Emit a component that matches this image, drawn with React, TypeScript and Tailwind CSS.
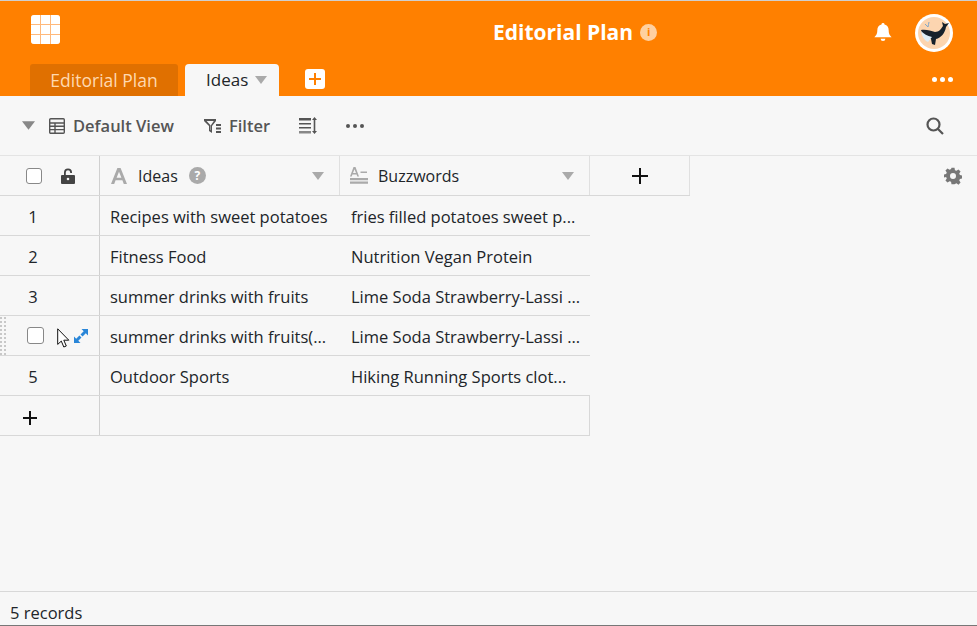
const rows = [
  { id: "1", idea: "Recipes with sweet potatoes", buzz: "fries filled potatoes sweet p..." },
  { id: "2", idea: "Fitness Food", buzz: "Nutrition Vegan Protein" },
  { id: "3", idea: "summer drinks with fruits", buzz: "Lime Soda Strawberry-Lassi ..." },
  { id: "4", idea: "summer drinks with fruits(...", buzz: "Lime Soda Strawberry-Lassi ...", hover: true },
  { id: "5", idea: "Outdoor Sports", buzz: "Hiking Running Sports clot..." },
];

function Caret({ className }: { className: string }) {
  return (
    <svg viewBox="0 0 12 8" className={className}>
      <path d="M0 0h12L6 8z" fill="currentColor" />
    </svg>
  );
}

function AppsIcon() {
  return (
    <div className="grid grid-cols-[repeat(3,9px)] grid-rows-[repeat(3,9px)] gap-px w-[29px] h-[29px] mb-[6px] rounded-[3px] overflow-hidden bg-[#ffb87a]">
      {Array.from({ length: 9 }).map((_, i) => (
        <div key={i} className="bg-white" />
      ))}
    </div>
  );
}

function Whale() {
  return (
    <svg viewBox="0 0 38 38" className="w-[38px] h-[38px]">
      <circle cx="19" cy="19" r="19" fill="#fff" />
      <circle cx="19" cy="19" r="16" fill="#fcd5b0" />
      <path d="M6 16c5-1 10 1 14 2 4 0 6-3 8-6l-1-4 3 2 4-1-3 4c-1 6-5 11-10 12l-1 6-3-1-1-5c-5-1-9-4-10-9z" fill="#17212b" />
      <path d="M6 17c3 3 6 5 11 6l-4 5c-4-2-6-6-7-11z" fill="#dcecf6" />
      <path d="M13 13c0-2 1-3 1-5M13 13c-1-1-2-2-3-3" stroke="#7fa6c9" strokeWidth="1" fill="none" />
    </svg>
  );
}

function TableIcon() {
  return (
    <svg viewBox="0 0 16 16" className="w-[16px] h-[16px] text-[#555]" fill="none" stroke="currentColor" strokeWidth="1.4">
      <rect x="0.7" y="0.7" width="14.600" height="14.600" rx="1" />
      <path d="M0.7 5h14.600M0.7 8.200h14.600M0.7 11.600h14.600M6 5v10.300" />
    </svg>
  );
}

function FilterIcon() {
  return (
    <svg viewBox="0 0 18 16" className="w-[18px] h-[16px] text-[#555]" fill="currentColor">
      <path d="M0 1h12v2L8 8v7l-3-2V8L0 3zm2.600 2L6.500 7.200v4.700l.4.300V7.200L9.800 3z" fillRule="evenodd" />
      <path d="M12 6h5v2h-5zM12 9.500h5v2h-5zM12 13h5v2h-5z" />
    </svg>
  );
}

function SortIcon() {
  return (
    <svg viewBox="0 0 19 17" className="w-[19px] h-[17px] text-[#555]" fill="currentColor">
      <path d="M0 1h12v2.500H0zM0 6h12v1.500H0zM0 10h12v1.500H0z" />
      <path d="M0 14h12v2.500H0z" fill="#888" />
      <path d="M15.500 0l2.500 3h-1.700v11H18l-2.500 3-2.500-3h1.700V3H13z" />
    </svg>
  );
}

function Dots({ className, dot }: { className: string; dot: string }) {
  return (
    <div className={`flex gap-[3px] ${className}`}>
      <span className={`${dot} rounded-full bg-current`} />
      <span className={`${dot} rounded-full bg-current`} />
      <span className={`${dot} rounded-full bg-current`} />
    </div>
  );
}

function LockIcon() {
  return (
    <svg viewBox="0 0 14 16" className="w-[14px] h-[16px] text-[#444]" fill="currentColor">
      <path d="M3 7V4.500a4 4 0 0 1 8 0V5H9.200v-.5a2.200 2.200 0 0 0-4.400 0V7H13a1 1 0 0 1 1 1v7a1 1 0 0 1-1 1H1a1 1 0 0 1-1-1V8a1 1 0 0 1 1-1z" />
      <circle cx="7" cy="11" r="1.300" fill="#f7f7f7" />
    </svg>
  );
}

function TextColIcon() {
  return (
    <svg viewBox="0 0 16 16" className="w-[16px] h-[16px] text-[#aaa]" fill="currentColor">
      <path d="M6.400 0h3.200L16 16h-3.200l-1.400-3.800H4.600L3.200 16H0zm1.600 3.800L5.600 9.800h4.800z" fillRule="evenodd" />
    </svg>
  );
}

function LongTextIcon() {
  return (
    <svg viewBox="0 0 18 17" className="w-[18px] h-[17px] text-[#aaa]" fill="currentColor">
      <path d="M3.500 0h2L9 9.500H7.300l-.7-2H2.400l-.7 2H0zm1 2.200L3 6h3z" fillRule="evenodd" />
      <path d="M10.500 4.500H17V6h-6.500zM0 11h18v2.200H0zM0 14.500h18v2.200H0z" />
    </svg>
  );
}

function GearIcon() {
  return (
    <svg viewBox="0 0 24 24" className="w-[18px] h-[18px] text-[#777]" fill="currentColor">
      <path fillRule="evenodd" d="M10 1h4l.6 3.200 2 .9 2.700-1.800 2.800 2.800-1.800 2.700.9 2 3.200.6v4l-3.200.6-.9 2 1.800 2.700-2.800 2.800-2.700-1.800-2 .9L14 23h-4l-.6-3.200-2-.9-2.700 1.800-2.800-2.800 1.800-2.700-.9-2L-.4 14v-4l3.200-.6.9-2L1.900 4.700 4.700 1.900l2.700 1.800 2-.9zM12 8a4 4 0 1 0 0 8 4 4 0 0 0 0-8z" />
    </svg>
  );
}

function CursorIcon() {
  return (
    <svg viewBox="0 0 13 20" className="absolute left-[57px] top-[12px] w-[13px] h-[20px]">
      <path d="M.7.8v15.600l3.600-3.300 2.500 5.900 2.500-1-2.500-5.800h5z" fill="#fff" stroke="#111" strokeWidth="1" />
    </svg>
  );
}

function ExpandIcon() {
  return (
    <svg viewBox="0 0 14 14" className="w-[14px] h-[14px] ml-[30px] text-[#2a86d8]" fill="currentColor">
      <path d="M14 0v6.500L11.800 4.300 8.600 7.500 6.500 5.400 9.700 2.200 7.500 0z" />
      <path d="M0 14V7.500l2.200 2.200 3.200-3.200 2.100 2.100-3.200 3.200L6.500 14z" />
    </svg>
  );
}

function GripDots() {
  return (
    <div className="grid grid-cols-2 gap-[2px] w-[6px] mr-[21px]">
      {Array.from({ length: 20 }).map((_, i) => (
        <span key={i} className="w-[2px] h-[2px] bg-[#c8c8c8]" />
      ))}
    </div>
  );
}

export default function App() {
  return (
    <div className="w-[977px] h-[626px] flex flex-col bg-[#f7f7f7] text-[#212529] overflow-hidden border-t border-[#cfcfcf] border-b-[#777] border-b font-['Open_Sans',sans-serif] text-[16px]">
      {/* Header */}
      <header className="h-[95px] shrink-0 bg-[#ff8000] flex flex-col">
        <div className="flex items-center justify-between h-[63px] pl-[31px] pr-[24px]">
          <AppsIcon />
          <div className="flex items-center gap-[7px] ml-[216px] text-white font-bold text-[21px]">
            Editorial Plan
            <span className="w-[17px] h-[17px] rounded-full bg-[#ffd0a0] text-[#ff8000] text-[11px] flex items-center justify-center">i</span>
          </div>
          <div className="flex items-center gap-[23px]">
            <svg viewBox="0 0 18 20" className="w-[18px] h-[19px] text-white" fill="currentColor">
              <path d="M9 0a1.600 1.600 0 0 1 1.600 1.700C13.500 2.400 15 4.800 15 8c0 4 1.500 5.300 3 7H0c1.500-1.700 3-3 3-7 0-3.200 1.500-5.600 4.400-6.300A1.600 1.600 0 0 1 9 0zM6.500 16.500h5a2.500 2.500 0 0 1-5 0z" />
            </svg>
            <Whale />
          </div>
        </div>
        <div className="flex items-end h-[32px] pl-[30px] pr-[24px]">
          <div className="w-[148px] h-[32px] rounded-t-[3px] bg-[#e07000] text-[#ffd9b0] text-[17.5px] flex items-center justify-center">Editorial Plan</div>
          <div className="w-[94px] h-[32px] ml-[7px] pl-[21px] rounded-t-[4px] bg-[#f7f7f7] text-[17px] flex items-center gap-[7px]">
            Ideas
            <Caret className="w-[12px] h-[8px] text-[#aaa]" />
          </div>
          <div className="w-[20px] h-[20px] ml-[26px] mb-[7px] rounded-[3px] bg-white text-[#ff8000] flex items-center justify-center">
            <svg viewBox="0 0 12 12" className="w-[12px] h-[12px]" fill="currentColor"><path d="M5 0h2v5h5v2H7v5H5V7H0V5h5z" /></svg>
          </div>
          <Dots className="ml-auto mb-[14px] text-white" dot="w-[5px] h-[5px]" />
        </div>
      </header>

      {/* Toolbar */}
      <div className="h-[59px] shrink-0 flex items-center pl-[22px] pr-[33px] font-semibold text-[#555] text-[16.5px]">
        <Caret className="w-[13px] h-[9px] text-[#888]" />
        <div className="ml-[14px]"><TableIcon /></div>
        <span className="ml-[8px] pt-[2px]">Default View</span>
        <div className="ml-[30px]"><FilterIcon /></div>
        <span className="ml-[7px] pt-[2px]">Filter</span>
        <div className="ml-[29px]"><SortIcon /></div>
        <Dots className="ml-[28px] text-[#555]" dot="w-[4px] h-[4px]" />
        <svg viewBox="0 0 18 18" className="ml-auto w-[18px] h-[18px] text-[#555]" fill="none" stroke="currentColor" strokeWidth="2.200">
          <circle cx="7.500" cy="7.500" r="6" />
          <path d="M12 12l5 5" />
        </svg>
      </div>

      {/* Grid */}
      <div className="flex-1 flex flex-col">
        <div className="flex h-[41px] border-t border-[#e4e4e4]">
          <div className="flex w-[690px] border-b border-[#d8d8d8]">
            <div className="w-[100px] border-r border-[#d0d0d0] flex items-center pl-[26px] gap-[19px]">
              <span className="w-[16px] h-[16px] rounded-[3px] border border-[#888] bg-white" />
              <LockIcon />
            </div>
            <div className="w-[240px] border-r border-[#e0e0e0] flex items-center pl-[11px] pr-[15px]">
              <TextColIcon />
              <span className="ml-[11px]">Ideas</span>
              <span className="ml-[11px] w-[17px] h-[17px] rounded-full bg-[#aaa] text-white text-[12px] font-bold flex items-center justify-center">?</span>
              <Caret className="ml-auto w-[12px] h-[8px] text-[#aaa]" />
            </div>
            <div className="w-[250px] border-r border-[#e0e0e0] flex items-center pl-[10px] pr-[15px]">
              <LongTextIcon />
              <span className="ml-[10px]">Buzzwords</span>
              <Caret className="ml-auto w-[12px] h-[8px] text-[#aaa]" />
            </div>
            <div className="w-[100px] border-r border-[#e0e0e0] flex items-center justify-center text-[#111]">
              <svg viewBox="0 0 16 16" className="w-[16px] h-[16px]" fill="currentColor"><path d="M7 0h2v7h7v2H9v7H7V9H0V7h7z" /></svg>
            </div>
          </div>
          <div className="flex-1 flex items-center justify-end pr-[15px]"><GearIcon /></div>
        </div>
        {rows.map((r) => (
          <div key={r.id} className="flex w-[590px] h-[40px] border-b border-[#d8d8d8] text-[16.5px]">
            <div className="relative w-[100px] border-r border-[#d0d0d0] flex items-center">
              {r.hover ? (
                <>
                  <GripDots />
                  <span className="w-[17px] h-[17px] rounded-[3px] border border-[#888] bg-white" />
                  <CursorIcon />
                  <ExpandIcon />
                </>
              ) : (
                <span className="w-[66px] text-center pt-[3px]">{r.id}</span>
              )}
            </div>
            <div className="w-[240px] pl-[10px] pt-[3px] flex items-center whitespace-nowrap">{r.idea}</div>
            <div className="w-[250px] pl-[11px] pt-[3px] flex items-center whitespace-nowrap">{r.buzz}</div>
          </div>
        ))}
        <div className="flex w-[590px] h-[40px] border-b border-[#d8d8d8]">
          <div className="w-[100px] border-r border-[#d0d0d0] flex items-center pl-[23px] text-[#111]">
            <svg viewBox="0 0 14 14" className="w-[14px] h-[14px] mt-[5px]" fill="currentColor"><path d="M6 0h2v6h6v2H8v6H6V8H0V6h6z" /></svg>
          </div>
          <div className="w-[490px] border-r border-[#d8d8d8]" />
        </div>
      </div>

      {/* Footer */}
      <div className="h-[34px] shrink-0 border-t border-[#d8d8d8] pl-[10px] pt-[10px] text-[16.5px] flex items-center">5 records</div>
    </div>
  );
}
